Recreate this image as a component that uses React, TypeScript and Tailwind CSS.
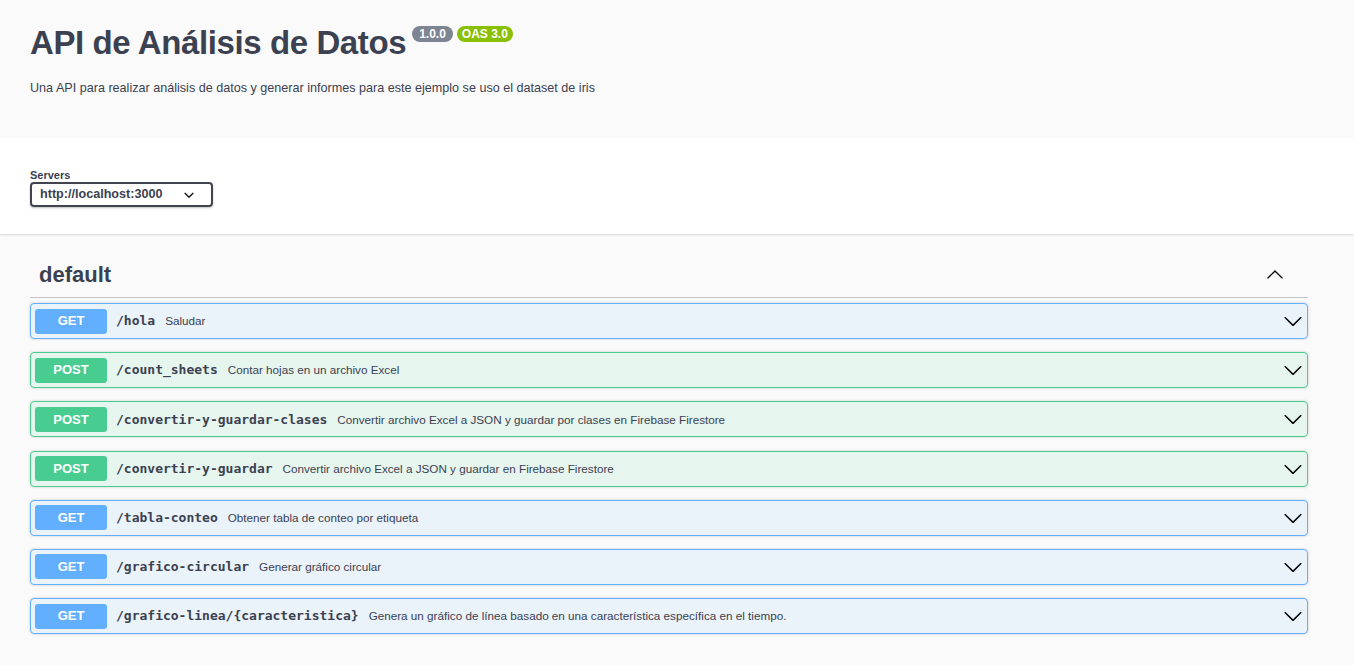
import React from "react";

type Op = { method: "GET" | "POST"; path: string; summary: string };

const ops: Op[] = [
  { method: "GET", path: "/hola", summary: "Saludar" },
  { method: "POST", path: "/count_sheets", summary: "Contar hojas en un archivo Excel" },
  {
    method: "POST",
    path: "/convertir-y-guardar-clases",
    summary: "Convertir archivo Excel a JSON y guardar por clases en Firebase Firestore",
  },
  {
    method: "POST",
    path: "/convertir-y-guardar",
    summary: "Convertir archivo Excel a JSON y guardar en Firebase Firestore",
  },
  { method: "GET", path: "/tabla-conteo", summary: "Obtener tabla de conteo por etiqueta" },
  { method: "GET", path: "/grafico-circular", summary: "Generar gráfico circular" },
  {
    method: "GET",
    path: "/grafico-linea/{caracteristica}",
    summary: "Genera un gráfico de línea basado en una característica específica en el tiempo.",
  },
];

const ArrowDown = ({ size = 20 }: { size?: number }) => (
  <svg width={size} height={size} viewBox="0 0 20 20" fill="#000">
    <path d="M17.418 6.109c.272-.268.709-.268.979 0s.271.701 0 .969l-7.908 7.83c-.27.268-.707.268-.979 0l-7.908-7.83c-.27-.268-.27-.701 0-.969.271-.268.709-.268.979 0L10 13.25l7.418-7.141z" />
  </svg>
);

const ArrowUp = ({ size = 20 }: { size?: number }) => (
  <svg width={size} height={size} viewBox="0 0 20 20" fill="#000">
    <path d="M17.418 14.908c.272.268.709.268.979 0s.271-.701 0-.969l-7.908-7.83c-.27-.268-.707-.268-.979 0l-7.908 7.83c-.27.268-.27.701 0 .969.271.268.709.268.979 0L10 7.767l7.418 7.141z" />
  </svg>
);

const OpBlock = ({ op }: { op: Op }) => {
  const get = op.method === "GET";
  return (
    <div
      className={`flex items-center h-[36px] mb-[13.2px] rounded-[4px] border shadow-[0_0_3px_rgba(0,0,0,0.19)] pl-[4px] pr-[4px] ${
        get ? "border-[#61affe] bg-[rgba(97,175,254,0.1)]" : "border-[#49cc90] bg-[rgba(73,204,144,0.1)]"
      }`}
    >
      <span
        className={`w-[72px] h-[25px] rounded-[3px] text-white text-[13px] font-bold flex items-center justify-center ${
          get ? "bg-[#61affe]" : "bg-[#49cc90]"
        }`}
      >
        {op.method}
      </span>
      <span className="ml-[9px] font-['DejaVu_Sans_Mono',monospace] font-semibold text-[13px] text-[#3b4151]">
        {op.path}
      </span>
      <span className="ml-[10px] text-[11.7px] text-[#3b4151]">{op.summary}</span>
      <span className="ml-auto flex items-center">
        <ArrowDown />
      </span>
    </div>
  );
};

export default function App() {
  return (
    <div className="min-h-screen bg-[#fafafa] font-['Liberation_Sans',Arial,sans-serif] text-[#3b4151]">
      {/* info */}
      <div className="h-[138px] pl-[30px] pr-[46px] pt-[24px]">
        <div className="flex items-start">
          <h1 className="text-[33px] tracking-[-0.4px] leading-[38px] font-bold">API de Análisis de Datos</h1>
          <span className="ml-[6px] mt-[2px] rounded-full bg-[#7d8492] text-white text-[12px] font-bold px-[7px] h-[16px] leading-[16px]">
            1.0.0
          </span>
          <span className="ml-[4px] mt-[2px] rounded-full bg-[#89bf04] text-white text-[12px] font-bold px-[5px] h-[16px] leading-[16px]">
            OAS 3.0
          </span>
        </div>
        <p className="mt-[17px] text-[12.6px]">
          Una API para realizar análisis de datos y generar informes para este ejemplo se uso el dataset de iris
        </p>
      </div>

      {/* servers */}
      <div className="h-[96px] bg-white shadow-[0_1px_2px_0_rgba(0,0,0,0.15)] pl-[30px] pt-[31px]">
        <div className="text-[11px] font-bold leading-[13px]">Servers</div>
        <div className="w-[183px] h-[25px] border-2 border-[#41444e] rounded-[4px] shadow-[0_1px_2px_0_rgba(0,0,0,0.25)] flex items-center pl-[8px] pr-[17px] text-[12.6px] font-bold">
          <span>http://localhost:3000</span>
          <svg className="ml-auto" width="10" height="10" viewBox="0 0 20 20" fill="#000">
            <path d="M17.418 6.109c.272-.268.709-.268.979 0s.271.701 0 .969l-7.908 7.83c-.27.268-.707.268-.979 0l-7.908-7.83c-.27-.268-.27-.701 0-.969.271-.268.709-.268.979 0L10 13.25l7.418-7.141z" stroke="#000" strokeWidth="1.5" />
          </svg>
        </div>
      </div>

      {/* tag */}
      <div className="pl-[30px] pr-[46px] pt-[17px]">
        <div className="flex items-center h-[47px] border-b border-[rgba(59,65,81,0.3)] pl-[9px] pr-[24px]">
          <span className="text-[22px] font-bold">default</span>
          <span className="ml-auto flex items-center">
            <ArrowUp size={18} />
          </span>
        </div>
        <div className="pt-[5px]">
          {ops.map((op) => (
            <OpBlock key={op.path} op={op} />
          ))}
        </div>
      </div>
    </div>
  );
}
